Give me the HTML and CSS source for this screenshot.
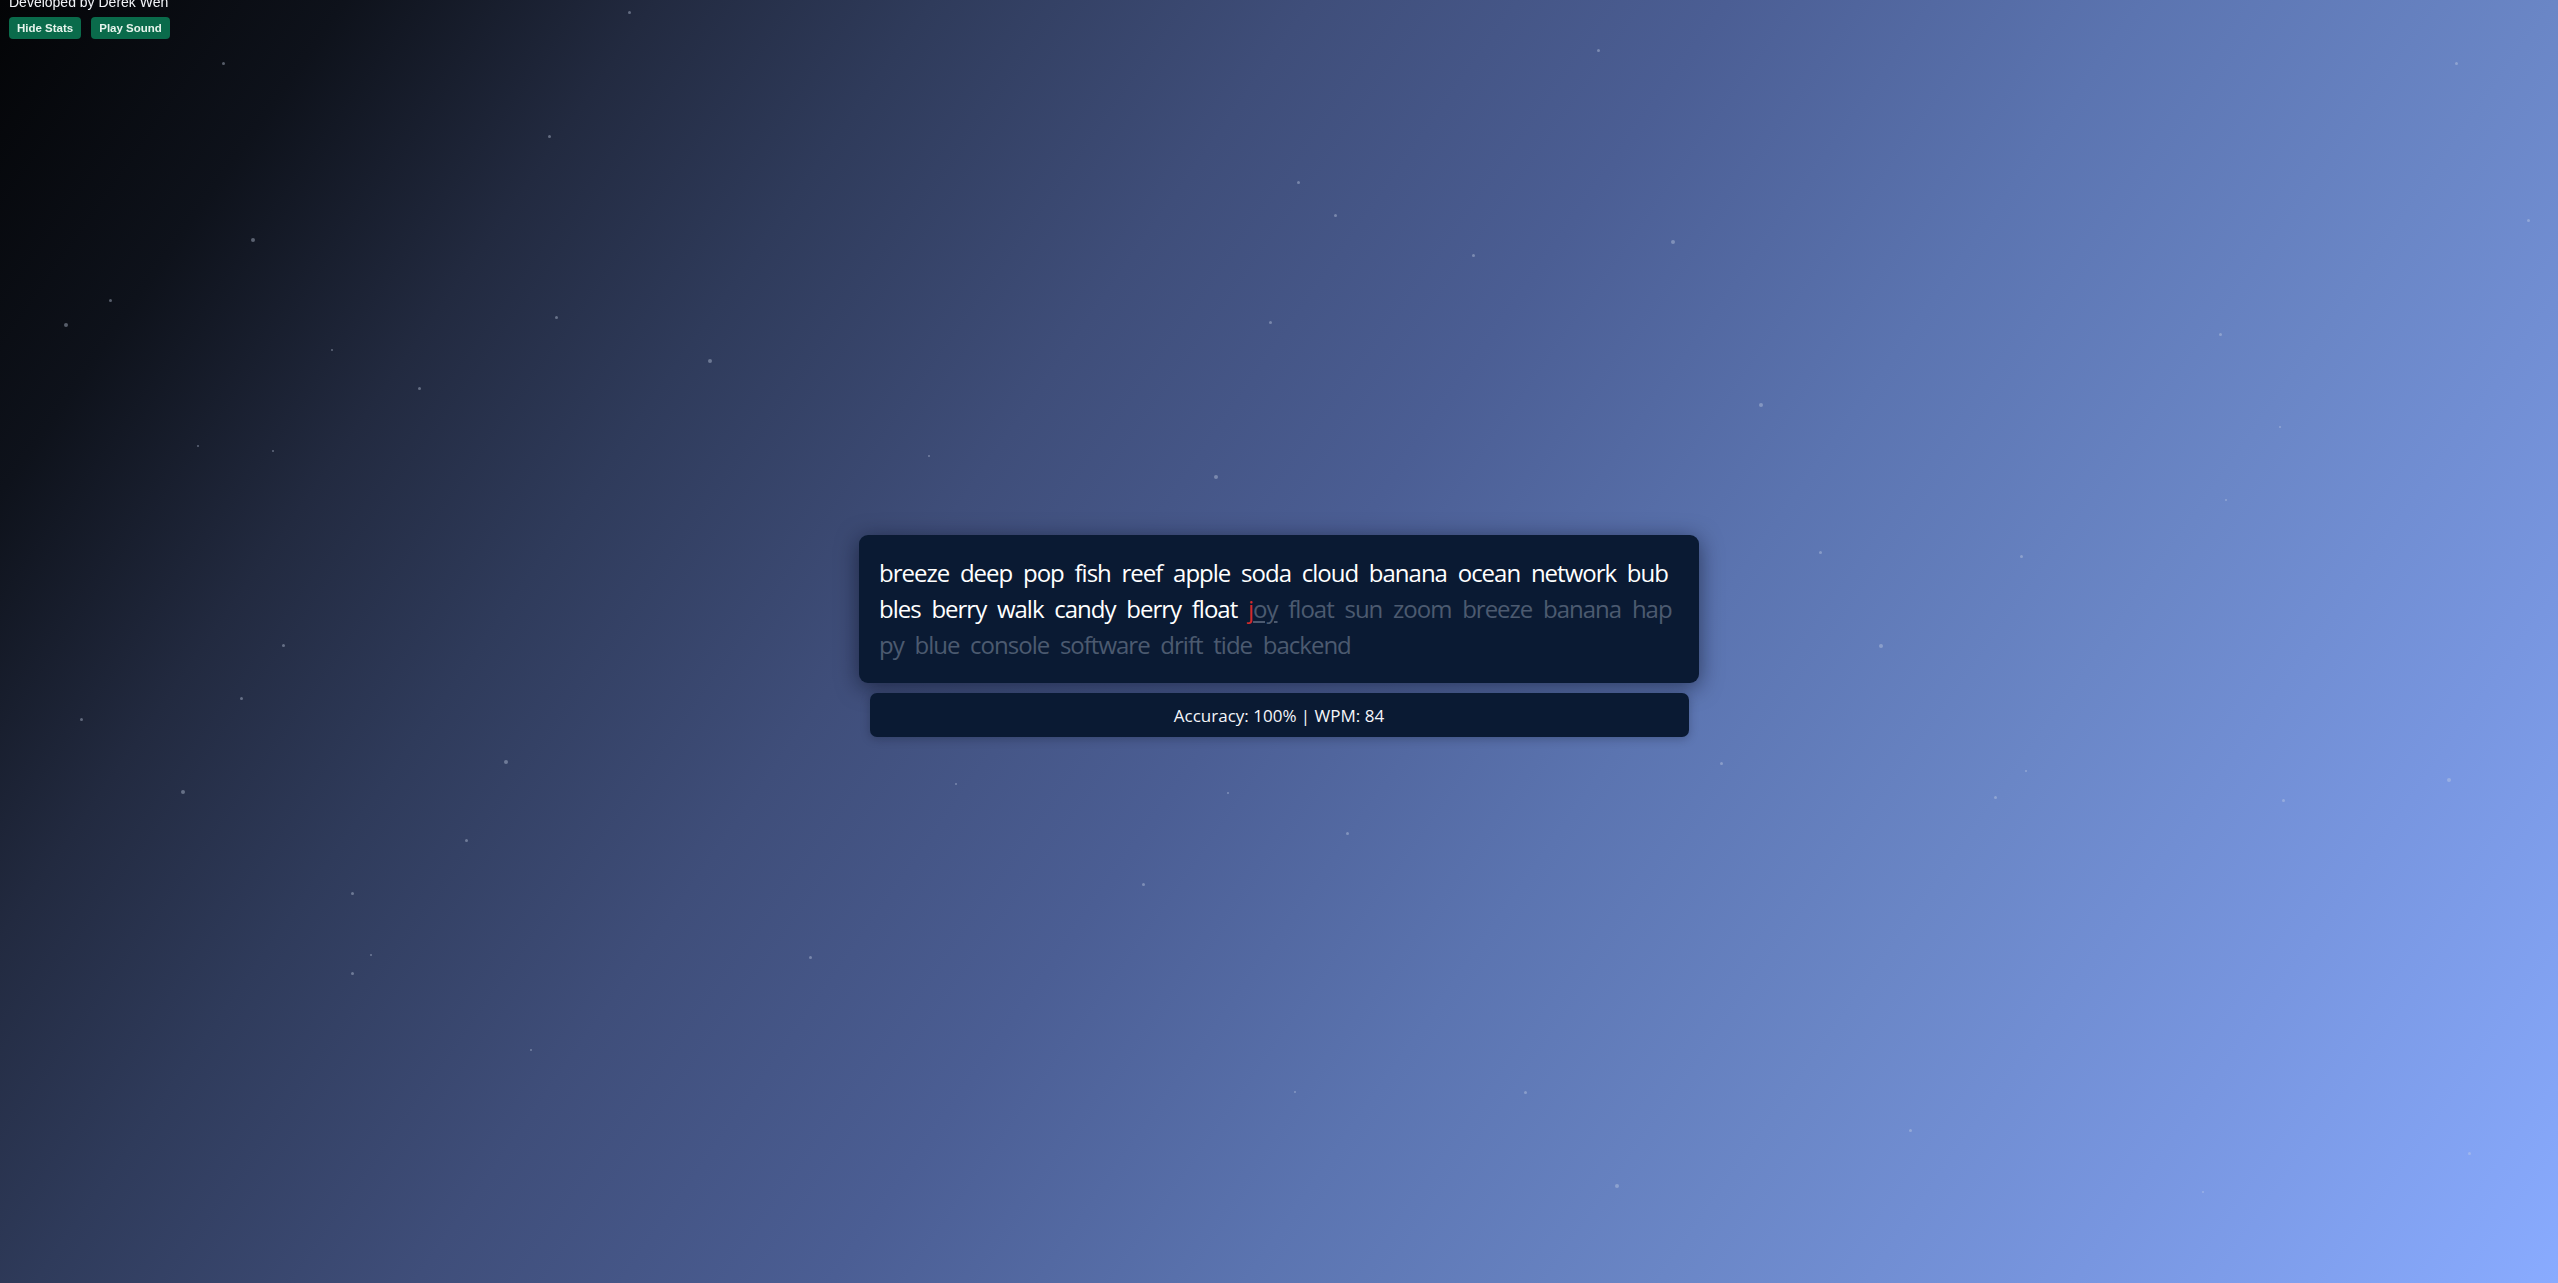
FILE: index.html
```html
<!DOCTYPE html>
<html lang="en">
<head>
<meta charset="utf-8">
<title>Typing Test</title>
<link rel="stylesheet" href="styles.css">
</head>
<body>
<div class="sky">
  <span class="star" style="left:628px;top:11px"></span>
  <span class="star" style="left:222px;top:62px"></span>
  <span class="star" style="left:548px;top:135px"></span>
  <span class="star big" style="left:251px;top:238px"></span>
  <span class="star" style="left:109px;top:299px"></span>
  <span class="star big" style="left:64px;top:323px"></span>
  <span class="star" style="left:555px;top:316px"></span>
  <span class="star small" style="left:331px;top:349px"></span>
  <span class="star big" style="left:708px;top:359px"></span>
  <span class="star" style="left:418px;top:387px"></span>
  <span class="star small" style="left:197px;top:445px"></span>
  <span class="star small" style="left:272px;top:450px"></span>
  <span class="star" style="left:282px;top:644px"></span>
  <span class="star" style="left:240px;top:697px"></span>
  <span class="star" style="left:80px;top:718px"></span>
  <span class="star big" style="left:504px;top:760px"></span>
  <span class="star big" style="left:181px;top:790px"></span>
  <span class="star" style="left:465px;top:839px"></span>
  <span class="star" style="left:351px;top:892px"></span>
  <span class="star small" style="left:370px;top:954px"></span>
  <span class="star" style="left:351px;top:972px"></span>
  <span class="star" style="left:809px;top:956px"></span>
  <span class="star small" style="left:530px;top:1049px"></span>
  <span class="star" style="left:1597px;top:49px"></span>
  <span class="star" style="left:2455px;top:62px"></span>
  <span class="star" style="left:1297px;top:181px"></span>
  <span class="star" style="left:1334px;top:214px"></span>
  <span class="star big" style="left:1671px;top:240px"></span>
  <span class="star" style="left:1472px;top:254px"></span>
  <span class="star" style="left:2527px;top:219px"></span>
  <span class="star" style="left:1269px;top:321px"></span>
  <span class="star" style="left:2219px;top:333px"></span>
  <span class="star big" style="left:1759px;top:403px"></span>
  <span class="star big" style="left:1214px;top:475px"></span>
  <span class="star small" style="left:928px;top:455px"></span>
  <span class="star small" style="left:2279px;top:426px"></span>
  <span class="star small" style="left:2225px;top:499px"></span>
  <span class="star" style="left:1819px;top:551px"></span>
  <span class="star" style="left:2020px;top:555px"></span>
  <span class="star big" style="left:1879px;top:644px"></span>
  <span class="star" style="left:1720px;top:762px"></span>
  <span class="star small" style="left:2025px;top:770px"></span>
  <span class="star" style="left:1994px;top:796px"></span>
  <span class="star" style="left:2282px;top:799px"></span>
  <span class="star big" style="left:2447px;top:778px"></span>
  <span class="star" style="left:1346px;top:832px"></span>
  <span class="star" style="left:1142px;top:883px"></span>
  <span class="star small" style="left:1294px;top:1091px"></span>
  <span class="star" style="left:1524px;top:1091px"></span>
  <span class="star" style="left:1909px;top:1129px"></span>
  <span class="star big" style="left:1615px;top:1184px"></span>
  <span class="star" style="left:2468px;top:1152px"></span>
  <span class="star small" style="left:2202px;top:1191px"></span>
  <span class="star small" style="left:955px;top:783px"></span>
  <span class="star small" style="left:1227px;top:792px"></span>
</div>

<header class="corner">
  <div class="credit">Developed by Derek Wen</div>
  <div class="controls">
    <button class="btn" type="button">Hide Stats</button>
    <button class="btn" type="button">Play Sound</button>
  </div>
</header>

<main class="stage">
  <div class="typing-box">
    <p class="words"><span class="typed">breeze deep pop fish reef apple soda cloud banana ocean network bub<br>bles berry walk candy berry float </span><span class="current"><span class="wrong">j</span><span class="pending-cur">oy</span></span><span class="pending"> float sun zoom breeze banana hap<br>py blue console software drift tide backend</span></p>
  </div>
  <div class="stats">Accuracy: 100% | WPM: 84</div>
</main>
</body>
</html>
```

FILE: styles.css
```css
* { box-sizing: border-box; }

html, body {
  margin: 0;
  padding: 0;
  height: 100%;
}

body {
  overflow: hidden;
  background: linear-gradient(125deg,
    #030406 0%,
    #0e121b 10%,
    #222a40 19%,
    #2f3b5b 27%,
    #3f4e7a 38%,
    #4b5e94 50%,
    #5b74b0 62%,
    #6a86c6 74%,
    #7896e0 86%,
    #89abff 100%);
  font-family: "Open Sans", "Noto Sans", sans-serif;
  color: #fff;
  position: relative;
}

.sky {
  position: absolute;
  inset: 0;
  pointer-events: none;
}

.star {
  position: absolute;
  width: 3px;
  height: 3px;
  border-radius: 50%;
  background: rgba(200, 210, 230, 0.4);
}
.star.big { width: 4px; height: 4px; }
.star.small { width: 2px; height: 2px; }

.corner {
  position: fixed;
  top: -6px;
  left: 9px;
  z-index: 2;
  font-family: "Liberation Sans", Arial, sans-serif;
}

.credit {
  font-size: 14px;
  line-height: 16px;
  color: #f2f4f8;
}

.controls {
  display: flex;
  gap: 10px;
  margin-top: 7px;
}

.btn {
  height: 22px;
  padding: 0 8px;
  border: 0;
  border-radius: 4px;
  background: #0a6b4b;
  color: #e6f4ec;
  font-family: "Liberation Sans", Arial, sans-serif;
  font-size: 11.5px;
  font-weight: bold;
  line-height: 22px;
  cursor: pointer;
}

.stage {
  position: relative;
  z-index: 1;
  min-height: 100vh;
  display: flex;
  flex-direction: column;
  align-items: center;
  justify-content: center;
  gap: 10px;
  padding-bottom: 11px;
}

.typing-box {
  width: 840px;
  padding: 20px;
  background: #0a1a33;
  border-radius: 9px;
  box-shadow: 0 4px 22px rgba(5, 10, 25, 0.55);
}

.words {
  margin: 0;
  font-size: 24px;
  line-height: 36px;
  letter-spacing: -1px;
  word-spacing: 5.5px;
  white-space: nowrap;
}

.typed { color: #ffffff; }

.pending { color: #4c5a70; }

.wrong { color: #d42b2b; }

.pending-cur {
  color: #4c5a70;
  text-decoration: underline;
  text-decoration-thickness: 1.5px;
  text-underline-offset: 3px;
}

.stats {
  width: 819px;
  height: 44px;
  display: flex;
  align-items: center;
  justify-content: center;
  background: #0a1a33;
  border-radius: 7px;
  font-size: 17px;
  color: #f4f6fa;
  box-shadow: 0 2px 10px rgba(5, 10, 25, 0.25);
}
```
